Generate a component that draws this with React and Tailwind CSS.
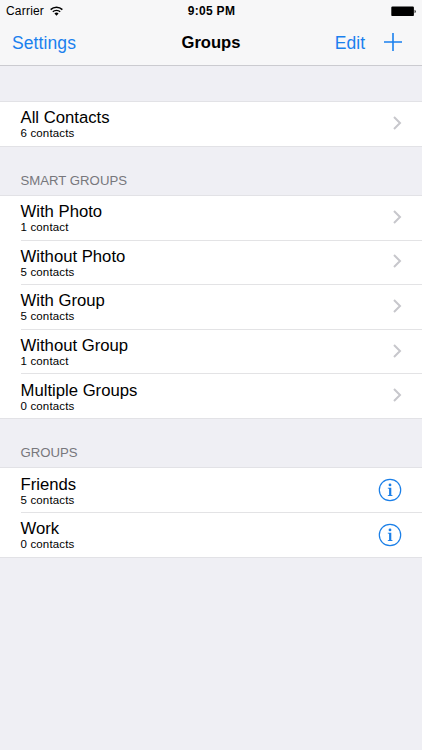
const smartGroups = [
  { name: "With Photo", count: "1 contact" },
  { name: "Without Photo", count: "5 contacts" },
  { name: "With Group", count: "5 contacts" },
  { name: "Without Group", count: "1 contact" },
  { name: "Multiple Groups", count: "0 contacts" },
];

const groups = [
  { name: "Friends", count: "5 contacts" },
  { name: "Work", count: "0 contacts" },
];

const WifiIcon = () => (
  <svg width="13" height="10" viewBox="0 0 12 9" fill="none" stroke="black">
    <path d="M0.6 3.2a7.7 7.7 0 0 1 10.8 0" strokeWidth="1.4" />
    <path d="M2.6 5.3a4.8 4.8 0 0 1 6.8 0" strokeWidth="1.3" />
    <path d="M6 8.8L4.1 6.8a2.7 2.7 0 0 1 3.8 0z" fill="black" stroke="none" />
  </svg>
);

const BatteryIcon = () => (
  <svg width="26" height="11" viewBox="0 0 26 11">
    <rect x="0.3" y="0.5" width="22.6" height="9.6" rx="1.2" fill="black" />
    <path d="M23.6 3.8c1.5.5 1.5 2.9 0 3.4z" fill="black" />
  </svg>
);

const Chevron = () => (
  <svg
    className="mr-5 mb-[2px] shrink-0"
    width="10"
    height="14"
    viewBox="0 0 10 14"
    fill="none"
    stroke="#c7c7cc"
    strokeWidth="2"
  >
    <path d="M2 1l6 6-6 6" />
  </svg>
);

const InfoIcon = () => (
  <svg
    className="mr-5 shrink-0"
    width="24"
    height="24"
    viewBox="0 0 24 24"
    fill="#1a7fe8"
  >
    <circle cx="12" cy="12" r="10.7" fill="none" stroke="#1a7fe8" strokeWidth="1.2" />
    <circle cx="12" cy="6.9" r="1.4" />
    <path d="M9.8 9.7h3.5v7.3l1.2.3v.8H9.8v-.8l1.3-.3v-6.2l-1.3-.3z" />
  </svg>
);

const Row = ({ name, count, last, info }) => (
  <div
    className={`h-[44.6px] bg-white pl-[20.5px] ${
      last ? "border-b border-[#e2e2e6]" : ""
    }`}
  >
    <div
      className={`flex h-full items-center justify-between ${
        last ? "" : "border-b border-[#e3e3e5]"
      }`}
    >
      <div className="pt-[0.8px] text-black">
        <div className="text-[16.7px] leading-[19px]">{name}</div>
        <div className="text-[11.5px] leading-[13px] tracking-[0.15px]">
          {count}
        </div>
      </div>
      {info ? <InfoIcon /> : <Chevron />}
    </div>
  </div>
);

const Section = ({ items, info }) => (
  <div className="border-t border-[#e2e2e6]">
    {items.map((item, i) => (
      <Row key={item.name} {...item} info={info} last={i === items.length - 1} />
    ))}
  </div>
);

const SectionTitle = ({ children }) => (
  <h2 className="flex h-[48.4px] items-end pb-[6px] pl-[20.5px] text-[13.2px] leading-[17px] text-[#77777c]">
    {children}
  </h2>
);

export default function App() {
  return (
    <div className="h-[750px] w-[422px] overflow-hidden bg-[#efeff4] font-['Liberation_Sans',Arial,sans-serif]">
      <header className="h-[66px] border-b border-[#cbcbd0] bg-[#f7f7f8]">
        <div className="grid h-[22px] grid-cols-3 items-center pl-[6px] pr-[5px] text-[12px] text-black">
          <div className="flex items-center gap-[6px]">
            <span className="tracking-[0.2px]">Carrier</span>
            <WifiIcon />
          </div>
          <span className="text-center font-bold tracking-[0.3px]">
            9:05 PM
          </span>
          <div className="flex justify-end">
            <BatteryIcon />
          </div>
        </div>
        <div className="grid h-[43px] grid-cols-3 items-center px-3 text-[17.5px] text-[#1a80ee]">
          <button className="text-left tracking-[0.1px]">Settings</button>
          <h1 className="text-center text-[16.6px] font-bold text-black">
            Groups
          </h1>
          <div className="flex items-center justify-end gap-[19px] pr-[8px]">
            <button>Edit</button>
            <svg
              className="-mt-[3px]"
              width="18"
              height="18"
              viewBox="0 0 18 18"
              stroke="#1a80ee"
              strokeWidth="1.6"
            >
              <path d="M9 0v18M0 9h18" />
            </svg>
          </div>
        </div>
      </header>

      <main className="pt-[35px]">
        <Section items={[{ name: "All Contacts", count: "6 contacts" }]} />
        <SectionTitle>SMART GROUPS</SectionTitle>
        <Section items={smartGroups} />
        <SectionTitle>GROUPS</SectionTitle>
        <Section items={groups} info />
      </main>
    </div>
  );
}
